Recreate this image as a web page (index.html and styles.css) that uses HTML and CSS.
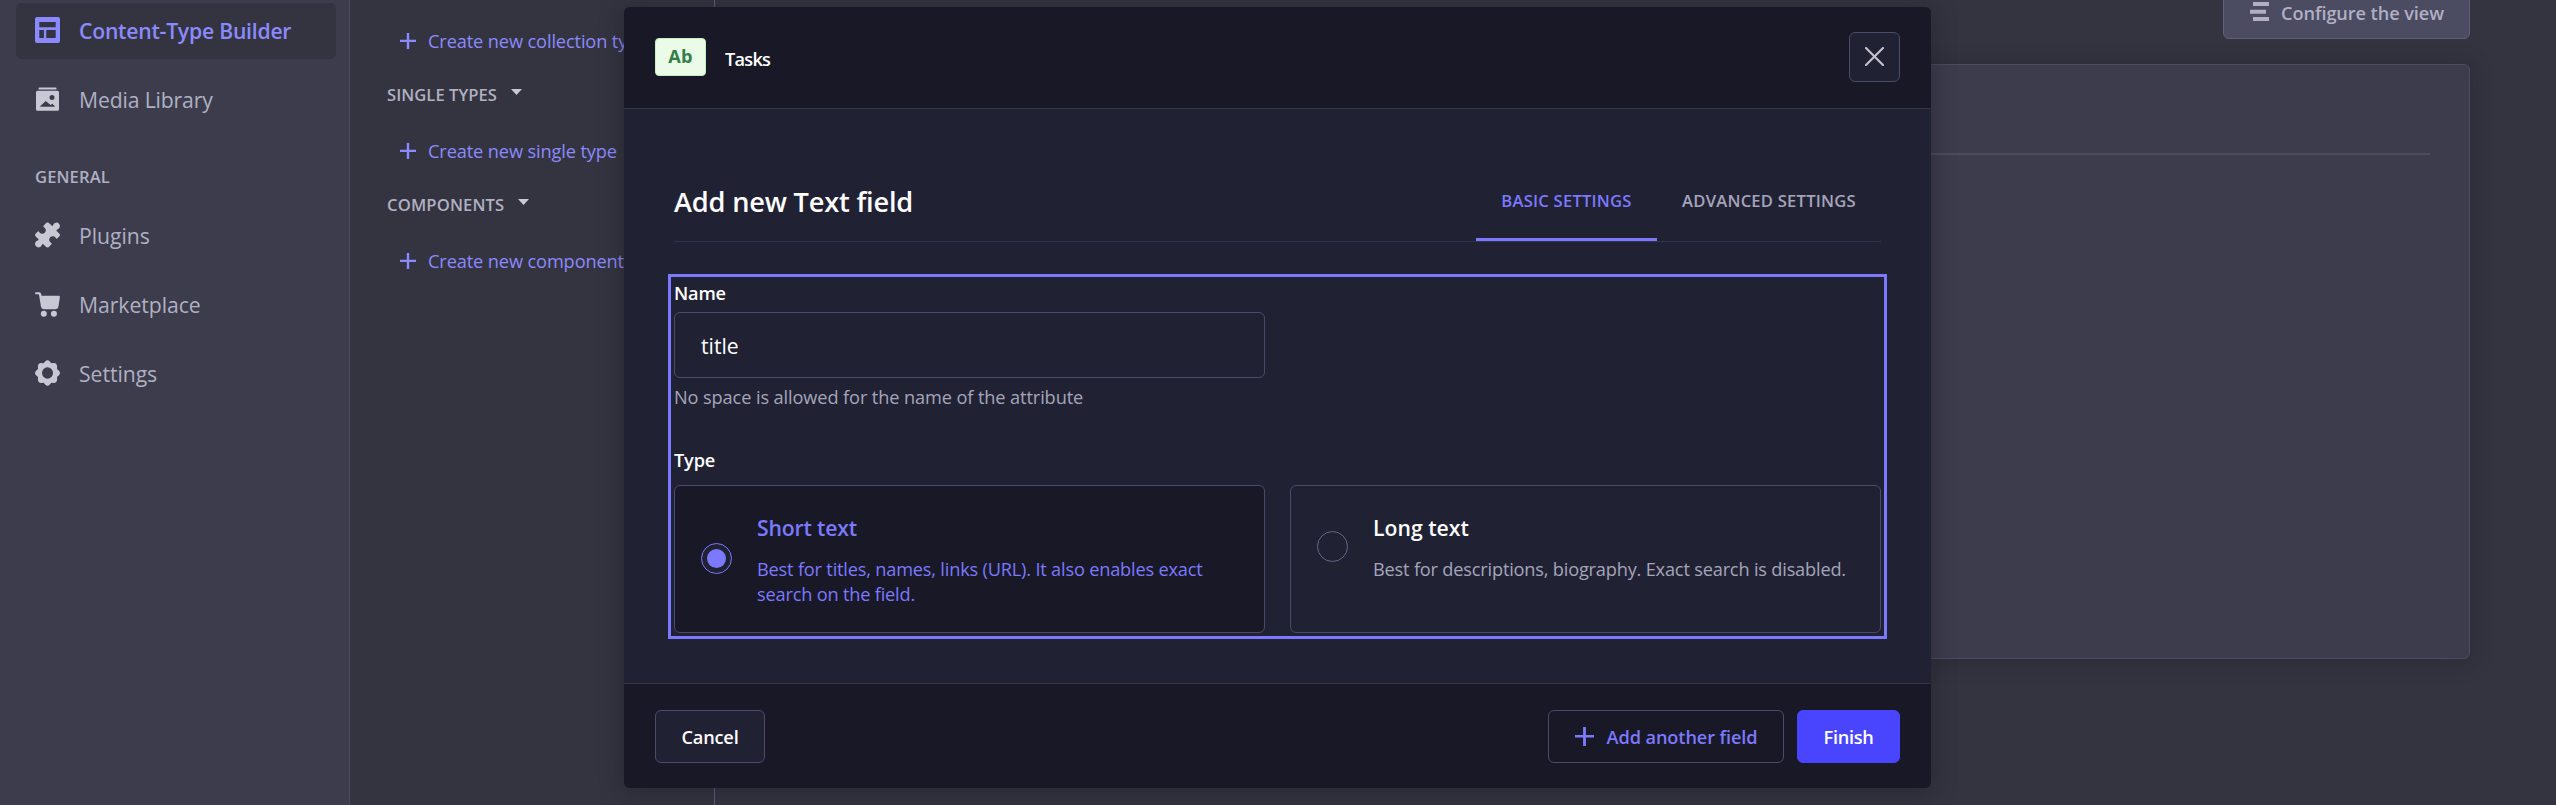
FILE: index.html
```html
<!DOCTYPE html>
<html lang="en">
<head>
<meta charset="utf-8">
<title>Content-Type Builder</title>
<link rel="stylesheet" href="styles.css">
</head>
<body>
<svg class="defs" width="0" height="0">
  <symbol id="plus" viewBox="0 0 16 16"><path d="M0 6.8h6.8V0h2.4v6.8H16v2.1H9.2V16H6.8V8.9H0z"/></symbol>
  <symbol id="caret" viewBox="0 0 11 6"><path d="M0 0h11L5.5 6z"/></symbol>
</svg>
<div class="app">
  <nav class="sidebar">
    <a class="nav-item active">
      <svg class="nav-icon" viewBox="0 0 25 26"><path fill-rule="evenodd" d="M2 0h21a2 2 0 0 1 2 2v22a2 2 0 0 1-2 2H2a2 2 0 0 1-2-2V2a2 2 0 0 1 2-2zM4.300 5v5.300h16.400V5zM4.300 13v8h4.600v-8zM11.300 13v8h9.400v-8z"/></svg>
      <span class="t-builder">Content-Type Builder</span>
    </a>
    <a class="nav-item">
      <svg class="nav-icon" viewBox="0 0 25 26"><path d="M4.500 1.400h16a1.100 1.100 0 0 1 0 2.200h-16a1.100 1.100 0 0 1 0-2.200z"/><path fill-rule="evenodd" d="M2.500 4.800h20a1.500 1.500 0 0 1 1.500 1.500v17a1.500 1.500 0 0 1-1.500 1.500h-20a1.500 1.500 0 0 1-1.500-1.500v-17a1.500 1.500 0 0 1 1.500-1.500zM17 8.900a2.500 2.500 0 1 0 0 5 2.500 2.500 0 0 0 0-5zM5.300 20.800h14.400v-.8l-2.400-2.300-1.800 1.300-4.700-4-5.500 5z"/></svg>
      <span class="t-media">Media Library</span>
    </a>
    <h3 class="nav-label">GENERAL</h3>
    <a class="nav-item">
      <svg class="nav-icon" viewBox="0 0 25 26"><path d="M10.600 1.400q1.900-1.800 3.800 0l2.200 2.200q1 .8 1.500-.6A3.500 3.500 0 1 1 22.300 7.500q-1.400.6-.6 1.500l2.500 2.500q1.600 1.500 0 3l-2 2q-.8.8-1.400-.4A3.500 3.500 0 1 0 16 20.800q1.200.7.400 1.500l-2 2.300q-1.900 1.800-3.800 0l-2.200-2.300q-1-.8-1.500.6A3.500 3.500 0 1 1 2.700 18.500q1.400-.6.600-1.500L.8 14.500q-1.600-1.500 0-3l2-2q.8-.8 1.400.4A3.500 3.500 0 1 0 9 5.200q-1.200-.7-.4-1.500z"/></svg>
      <span>Plugins</span>
    </a>
    <a class="nav-item">
      <svg class="nav-icon" viewBox="0 0 25 26"><path d="M1 1.300h3.200q1.700 0 2 1.700l.3 1.800h17.500q1 0 .9 1.100l-1.400 9.300q-.4 3-3.300 3H9.300q-2.900 0-3.400-3L4.100 4.200q-.1-.9-1-.9H1a1 1 0 0 1 0-2z"/><circle cx="8.800" cy="22.700" r="3"/><circle cx="18.900" cy="22.700" r="3"/></svg>
      <span>Marketplace</span>
    </a>
    <a class="nav-item">
      <svg class="nav-icon" viewBox="-12.500 -13 25 26"><path fill-rule="evenodd" d="M-2.300-11.500Q0-14 2.300-11.500L3.800-9.800 6.500-10Q9.400-9.800 9.600-6.500L9.500-3.900 11.400-2.300Q13.600 0 11.400 2.300L9.500 3.900 9.600 6.500Q9.400 9.800 6.500 10L3.800 9.800 2.300 11.500Q0 14-2.300 11.500L-3.800 9.800-6.500 10Q-9.400 9.800-9.600 6.500L-9.500 3.900-11.400 2.300Q-13.600 0-11.400-2.300L-9.500-3.900-9.600-6.500Q-9.400-9.800-6.500-10L-3.800-9.800zM0-5.700a5.500 5.700 0 1 0 0 11.400 5.500 5.700 0 0 0 0-11.400z"/></svg>
      <span>Settings</span>
    </a>
  </nav>

  <aside class="subnav">
    <a class="create"><svg class="create-icon"><use href="#plus"/></svg><span>Create new collection type</span></a>
    <h3 class="group">SINGLE TYPES<svg class="caret"><use href="#caret"/></svg></h3>
    <a class="create"><svg class="create-icon"><use href="#plus"/></svg><span>Create new single type</span></a>
    <h3 class="group components">COMPONENTS<svg class="caret"><use href="#caret"/></svg></h3>
    <a class="create"><svg class="create-icon"><use href="#plus"/></svg><span>Create new component</span></a>
  </aside>

  <main class="main">
    <button class="configure">
      <svg class="configure-icon" viewBox="0 0 19 19"><path d="M3 0h16v4H3zM0 7.700h16v4H0zM3 15h16v4H3z"/></svg>
      <span>Configure the view</span>
    </button>
    <section class="card"><hr class="card-line"></section>
  </main>
</div>

<div class="modal">
  <header class="modal-header">
    <span class="badge">Ab</span>
    <strong class="crumb">Tasks</strong>
    <button class="close"><svg viewBox="0 0 19 19"><path d="M1 1l17 17M18 1L1 18"/></svg></button>
  </header>
  <div class="modal-body">
    <div class="heading">
      <h2 class="title">Add new Text field</h2>
      <div class="tabs"><span class="tab basic">BASIC SETTINGS</span><span class="tab advanced">ADVANCED SETTINGS</span></div>
    </div>
    <div class="panel">
      <label class="label">Name</label>
      <div class="input">title</div>
      <p class="hint">No space is allowed for the name of the attribute</p>
      <label class="label type-label">Type</label>
      <div class="options">
        <div class="option selected">
          <span class="radio"></span>
          <div><h4 class="option-title">Short text</h4><p class="option-desc">Best for titles, names, links (URL). It also enables exact<br>search on the field.</p></div>
        </div>
        <div class="option">
          <span class="radio"></span>
          <div><h4 class="option-title long">Long text</h4><p class="option-desc">Best for descriptions, biography. Exact search is disabled.</p></div>
        </div>
      </div>
    </div>
  </div>
  <footer class="modal-footer">
    <button class="btn cancel">Cancel</button>
    <button class="btn another"><svg class="another-icon"><use href="#plus"/></svg><span>Add another field</span></button>
    <button class="btn finish">Finish</button>
  </footer>
</div>
</body>
</html>
```
FILE: styles.css
```css
* { box-sizing: border-box; margin: 0; padding: 0; }

body {
  position: relative;
  width: 2556px;
  height: 805px;
  overflow: hidden;
  background: #343440;
  color: #fff;
  font-family: "Open Sans", sans-serif;
  font-size: 18.2px;
  letter-spacing: -0.12px;
}

button { font: inherit; letter-spacing: inherit; color: inherit; background: none; }
h2, h3, h4 { font-weight: 600; }
svg { display: block; flex: none; fill: currentColor; }
.defs { position: absolute; }

.app { display: flex; height: 805px; }

/* Main navigation */
.sidebar {
  display: flex;
  flex-direction: column;
  width: 350px;
  padding: 3px 13px 0 16px;
  background: #3c3c4c;
  border-right: 1px solid #4b4b62;
  color: #b0b0c2;
}
.nav-item {
  display: flex;
  align-items: center;
  gap: 19px;
  width: 320px;
  height: 56px;
  margin-bottom: 13px;
  padding: 0 0 2px 19px;
  border-radius: 6px;
  font-size: 21.2px;
  letter-spacing: -0.05px;
}
.nav-item.active { background: #343440; color: #8b89ff; font-weight: 600; }
.nav-icon { width: 25px; height: 26px; color: #c8c8d5; }
.active .nav-icon { color: #8b89ff; }
.t-builder { letter-spacing: -0.24px; }
.t-media { letter-spacing: -0.15px; }
.nav-label {
  margin: 25px 0 20px;
  padding-left: 19px;
  font-size: 16.6px;
  line-height: 22px;
  letter-spacing: 0.1px;
}

/* Content type list */
.subnav {
  width: 365px;
  padding: 27px 0 0 37px;
  border-right: 1px solid #60607c;
}
.create {
  display: flex;
  align-items: center;
  gap: 12px;
  height: 30px;
  padding: 0 0 2px 13px;
  color: #8b89ff;
  white-space: nowrap;
}
.create-icon { width: 16px; height: 16px; margin-top: -1px; }
.group {
  display: flex;
  align-items: center;
  gap: 14px;
  margin: 27px 0 31px;
  color: #b0b0c2;
  font-size: 16.6px;
  line-height: 22px;
  letter-spacing: 0.03px;
}
.components { letter-spacing: 0.15px; }
.caret { width: 11px; height: 6px; margin-top: -6px; color: #c8c8d5; }

/* Page behind the dialog */
.main { flex: 1; padding: 0 86px 0 88px; }
.configure {
  display: flex;
  align-items: center;
  gap: 12px;
  width: 247px;
  height: 53px;
  margin: -14px 0 25px auto;
  padding-left: 26px;
  background: #4b4b62;
  border: 1px solid #60607c;
  border-radius: 6px;
  color: #b0b0c2;
  font-weight: 600;
  letter-spacing: -0.09px;
}
.configure-icon { width: 19px; height: 19px; margin-top: -2px; }
.card {
  height: 595px;
  padding: 88px 39px 0;
  background: #3c3c4c;
  border: 1px solid #4b4b62;
  border-radius: 6px;
  box-shadow: 0 2px 22px rgba(24, 24, 38, 0.3);
}
.card-line { height: 2px; border: 0; background: #4b4b62; }

/* Dialog */
.modal {
  position: absolute;
  left: 624px;
  top: 7px;
  display: flex;
  flex-direction: column;
  width: 1307px;
  height: 781px;
  overflow: hidden;
  background: #212134;
  border-radius: 6px;
  box-shadow: 0 3px 24px rgba(20, 20, 30, 0.4);
}
.modal-header {
  display: flex;
  align-items: center;
  height: 102px;
  padding: 0 31px;
  background: #181826;
  border-bottom: 1px solid #32324d;
}
.badge {
  width: 51px;
  height: 38px;
  margin: -1px 19px 0 0;
  background: #eafbe7;
  border: 1px solid #c6f0c2;
  border-radius: 4px;
  color: #328048;
  font-weight: 700;
  line-height: 35px;
  text-align: center;
  letter-spacing: 0.3px;
}
.crumb { padding-top: 3px; font-weight: 600; letter-spacing: -0.75px; }
.close {
  display: grid;
  place-items: center;
  width: 51px;
  height: 50px;
  margin: -2px 0 0 auto;
  background: #212134;
  border: 1px solid #4a4a6a;
  border-radius: 6px;
  color: #c0c0cf;
}
.close svg { width: 19px; height: 19px; margin-top: -1px; fill: none; stroke: currentColor; stroke-width: 2.2; stroke-linecap: round; }

.modal-body { flex: 1; padding: 52px 50px 0; }
.heading {
  display: flex;
  justify-content: space-between;
  align-items: center;
  height: 81px;
  border-bottom: 1px solid #32324d;
}
.title { font-size: 27.2px; letter-spacing: -0.19px; }
.tabs { display: flex; align-self: stretch; }
.tab {
  display: flex;
  align-items: center;
  justify-content: center;
  padding-top: 1px;
  border-bottom: 3px solid transparent;
  color: #a5a5ba;
  font-size: 16.6px;
  font-weight: 600;
  letter-spacing: 0.22px;
}
.basic { width: 181px; border-color: #7b79ff; color: #7b79ff; }
.advanced { width: 224px; }

.panel { margin: 32px -6px 0; padding: 3px; border: 3px solid #7b79ff; }
.label { display: block; font-weight: 600; line-height: 26px; letter-spacing: -0.18px; }
.input {
  width: 591px;
  height: 66px;
  margin: 6px 0 7px;
  padding-left: 26px;
  border: 1px solid #4a4a6a;
  border-radius: 6px;
  font-size: 21.2px;
  line-height: 65px;
  letter-spacing: 0;
}
.hint { color: #a5a5ba; line-height: 25px; letter-spacing: -0.11px; }
.type-label { margin: 37px 0 12px; }
.options { display: flex; gap: 25px; }
.option {
  display: flex;
  align-items: flex-start;
  gap: 25px;
  width: 591px;
  height: 148px;
  padding: 27px 0 0 26px;
  border: 1px solid #4a4a6a;
  border-radius: 6px;
}
.selected { background: #181826; color: #7b79ff; }
.radio {
  display: grid;
  place-items: center;
  flex: none;
  width: 31px;
  height: 31px;
  margin-top: 18px;
  border: 1px solid #666687;
  border-radius: 50%;
}
.selected .radio { margin-top: 30px; background: #212134; border-color: #7b79ff; }
.selected .radio::after { content: ""; width: 19px; height: 19px; background: #7b79ff; border-radius: 50%; }
.option-title { font-size: 21.2px; line-height: 30px; letter-spacing: -0.17px; }
.long { letter-spacing: 0; }
.option-desc { margin-top: 14px; color: #a5a5ba; line-height: 25px; letter-spacing: -0.19px; white-space: nowrap; }
.selected .option-desc { color: #7b79ff; }

.modal-footer {
  display: flex;
  align-items: center;
  gap: 13px;
  height: 105px;
  padding: 0 31px;
  background: #181826;
  border-top: 1px solid #32324d;
}
.btn {
  display: flex;
  align-items: center;
  justify-content: center;
  height: 53px;
  padding-top: 2px;
  border: 1px solid #4a4a6a;
  border-radius: 6px;
  font-weight: 600;
}
.cancel { width: 110px; margin-right: auto; background: #212134; letter-spacing: -0.2px; }
.another { gap: 13px; width: 236px; color: #7b79ff; }
.another-icon { width: 19px; height: 19px; margin-top: -2px; }
.finish { width: 103px; background: #4945ff; border-color: #4945ff; letter-spacing: -0.3px; }
```
